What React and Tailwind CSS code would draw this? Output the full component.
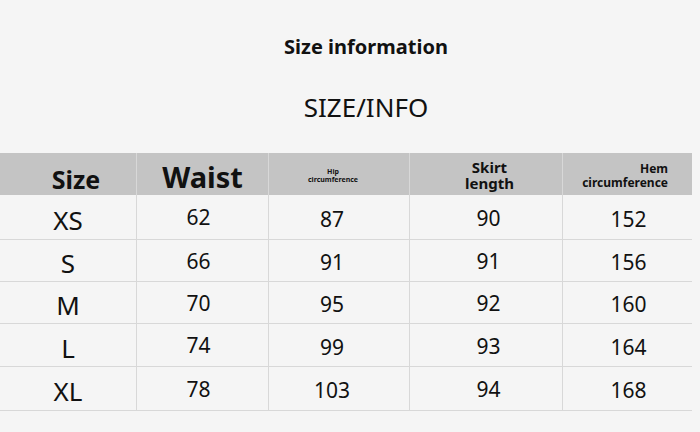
import React from "react";

const rows = [
  { s: "XS", v: ["62", "87", "90", "152"], h: "h-[45px]" },
  { s: "S", v: ["66", "91", "91", "156"], h: "h-[42px]" },
  { s: "M", v: ["70", "95", "92", "160"], h: "h-[42px]" },
  { s: "L", v: ["74", "99", "93", "164"], h: "h-[43px]" },
  { s: "XL", v: ["78", "103", "94", "168"], h: "h-[44px]" },
];

export default function App() {
  return (
    <div
      className="w-[700px] h-[432px] bg-[#f5f5f5] overflow-hidden text-[#111]"
      style={{ fontFamily: '"Noto Sans", "Open Sans", sans-serif' }}
    >
      <div className="h-[153px] flex flex-col items-center pl-[32px]">
        <div className="mt-[35px] text-[20px] leading-[24px] font-bold">Size information</div>
        <div className="mt-[32px] text-[26px] leading-[32px]">SIZE/INFO</div>
      </div>
      <div className="w-[692px]">
        <div className="grid grid-cols-[136px_132px_141px_153px_130px] h-[42px] bg-[#c4c4c4]">
          <div className="flex items-end justify-center pl-[16px] pb-[1px] text-[25px] leading-[30px] font-bold">Size</div>
          <div className="flex items-end justify-center pb-[1px] border-l border-[#d8d8d8] text-[29px] leading-[34px] font-bold">Waist</div>
          <div className="flex items-center justify-center pr-[12px] pt-[4px] border-l border-[#d8d8d8] text-[7px] leading-[8px] font-bold text-center">
            <div>Hip<br />circumference</div>
          </div>
          <div className="flex items-center justify-center pl-[7px] pt-[2px] border-l border-[#d8d8d8] text-[15px] leading-[16px] font-bold text-center">
            <div>Skirt<br />length</div>
          </div>
          <div className="flex items-center justify-end pr-[24px] pt-[3px] border-l border-[#d8d8d8] text-[12px] leading-[14px] font-bold text-right">
            <div>Hem<br />circumference</div>
          </div>
        </div>
        {rows.map((r) => (
          <div key={r.s} className={`grid grid-cols-[136px_132px_141px_153px_130px] border-b border-[#d8d8d8] ${r.h}`}>
            <div className="flex items-center justify-center pt-[5px] text-[26px] leading-[30px]">{r.s}</div>
            <div className="flex items-center justify-center pr-[8px] border-l border-[#d8d8d8] text-[21px] leading-[26px]">{r.v[0]}</div>
            <div className="flex items-center justify-center pr-[14px] pt-[3px] border-l border-[#d8d8d8] text-[21px] leading-[26px]">{r.v[1]}</div>
            <div className="flex items-center justify-center pl-[5px] pt-[1px] border-l border-[#d8d8d8] text-[21px] leading-[26px]">{r.v[2]}</div>
            <div className="flex items-center justify-center pl-[2px] pt-[3px] border-l border-[#d8d8d8] text-[21px] leading-[26px]">{r.v[3]}</div>
          </div>
        ))}
      </div>
    </div>
  );
}
